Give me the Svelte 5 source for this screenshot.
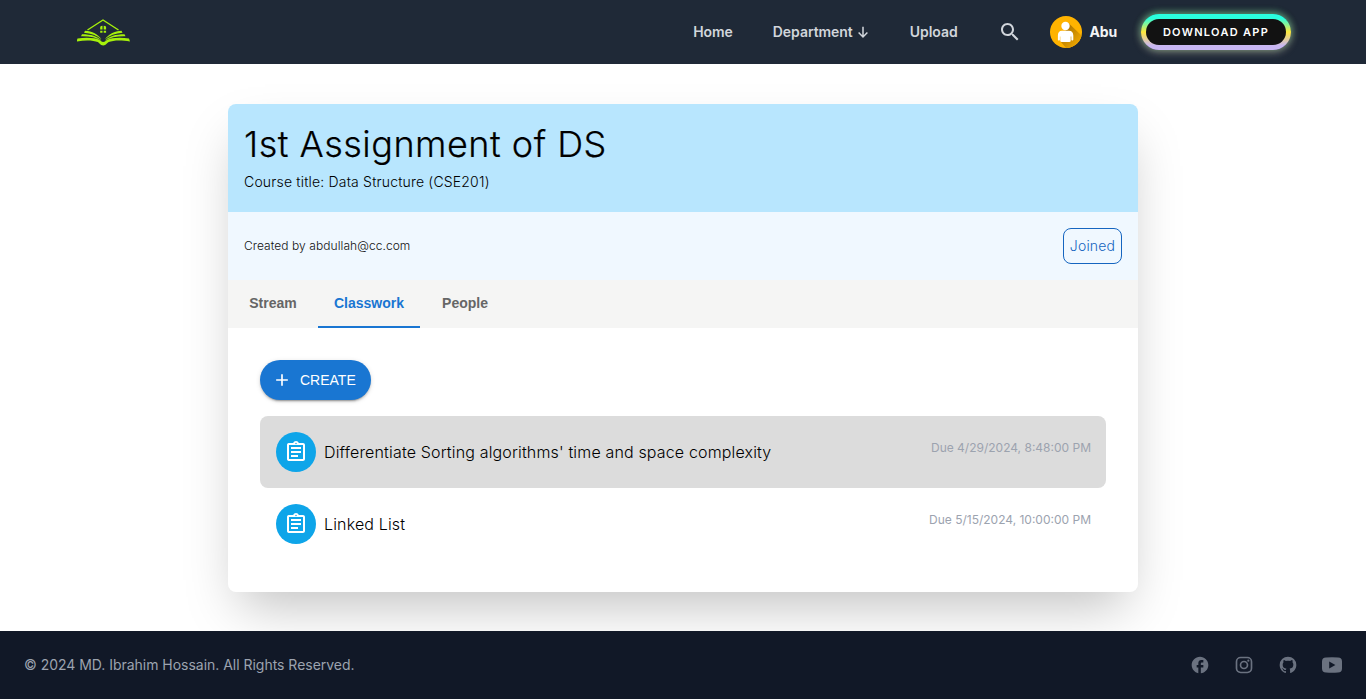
<script>
  const links = ['Home', 'Department', 'Upload'];
  const tabs = ['Stream', 'Classwork', 'People'];
  const active = 'Classwork';
  const tasks = [
    { title: "Differentiate Sorting algorithms' time and space complexity", due: 'Due 4/29/2024, 8:48:00 PM', hover: true },
    { title: 'Linked List', due: 'Due 5/15/2024, 10:00:00 PM', hover: false }
  ];
</script>

<div class="page">
  <header>
    <svg class="logo" viewBox="0 0 54 28" width="54" height="28" fill="none" stroke="#a6f10b">
      <path d="M10.5 12 26 2l15.500 10" stroke-width="1.400" />
      <path d="M23.200 11.600V9.200q0-.900 1-1.200l1.300-.3v3.900zM26.700 11.600V7.700l1.400.3q1 .3 1 1.200v2.400zM23.200 12.700h2.300v2h-2.300zM26.700 12.700h2.400v2h-2.400z" fill="#a6f10b" stroke="none" />
      <path d="M8 12.800c7 .5 13.200 3.500 16.500 8.500-4.500-3.800-10.500-6-17.500-6.600zM44.500 12.800c-7 .5-13.200 3.500-16.500 8.500 4.500-3.800 10.500-6 17.500-6.600zM5 16.300c9 0 15.500 2 19.500 6.300-5-3.300-12-4.600-20.500-4.400zM47.500 16.300c-9 0-15.500 2-19.500 6.300 5-3.300 12-4.600 20.500-4.400zM.5 20.500c9.500-1.300 17.700-.7 22.500 1.700 1.300.8 1.600 1.700 3.200 1.700s2-.9 3.300-1.700c4.800-2.400 13-3 22.500-1.700l1 3.100c-9-1.700-17-1.200-21.300.5-2 1-2.300 3.300-5.500 3.300s-3.500-2.300-5.400-3.300c-4.300-1.700-12.300-2.200-21.300-.5z" fill="#a6f10b" stroke="none" />
    </svg>
    <nav>
      {#each links as link}
        <a class="link">{link}{#if link === 'Department'}<svg viewBox="0 0 24 24" width="14" height="14" fill="none" stroke="currentColor" stroke-width="2.600"><path d="M12 3v17M4.500 13l7.500 7.500 7.500-7.500" /></svg>{/if}</a>
      {/each}
      <svg class="search" viewBox="0 0 24 24" width="24" height="24" fill="currentColor"><path d="M15.500 14h-.79l-.28-.27C15.410 12.590 16 11.110 16 9.500 16 5.910 13.090 3 9.500 3S3 5.910 3 9.500 5.910 16 9.500 16c1.610 0 3.090-.59 4.230-1.570l.27.28v.79l5 4.990L20.490 19l-4.990-5zm-6 0C7.010 14 5 11.990 5 9.500S7.010 5 9.500 5 14 7.010 14 9.500 11.990 14 9.500 14z" /></svg>
      <div class="user">
        <svg viewBox="0 0 32 32" width="32" height="32">
          <defs>
            <clipPath id="disc"><circle cx="16" cy="16" r="16" /></clipPath>
            <linearGradient id="shade" x1="0" y1="0" x2="1" y2="1"><stop offset=".3" stop-color="#b77d00" /><stop offset=".9" stop-color="#f5ab00" /></linearGradient>
          </defs>
          <g clip-path="url(#disc)">
            <path fill="#ffb300" d="M0 0h32v32H0z" />
            <path fill="url(#shade)" d="M18.500 7 32 20v12H16l-5-6z" />
            <circle cx="15.500" cy="10" r="4.200" fill="#fff" />
            <path fill="#fff" d="M12 14.700h7c2.700 0 4.300 2 4.300 4.800v4c0 1.300-2 1.300-2 0v-3h-.6v4.300q0 1.200-1.500 1.200h-7.400q-1.500 0-1.500-1.200v-4.300h-.4v3c0 1.300-2 1.300-2 0v-4c0-2.800 1.400-4.800 4.100-4.800z" />
          </g>
        </svg>
        <span>Abu</span>
      </div>
      <div class="download"><span>DOWNLOAD APP</span></div>
    </nav>
  </header>

  <main>
    <section class="card">
      <div class="hero">
        <h1>1st Assignment of DS</h1>
        <p>Course title: Data Structure (CSE201)</p>
      </div>
      <div class="creator">
        <span>Created by abdullah@cc.com</span>
        <button class="joined">Joined</button>
      </div>
      <div class="tabs">
        {#each tabs as tab}
          <div class="tab" class:active={tab === active}>{tab}</div>
        {/each}
      </div>
      <div class="body">
        <button class="create">
          <svg viewBox="0 0 24 24" width="20" height="20" fill="currentColor"><path d="M19 13h-6v6h-2v-6H5v-2h6V5h2v6h6z" /></svg>
          CREATE
        </button>
        {#each tasks as task}
          <div class="task" class:hover={task.hover}>
            <div class="badge">
              <svg viewBox="0 0 24 24" width="24" height="24" fill="#fff"><path d="M7 15h7v2H7zm0-4h10v2H7zm0-4h10v2H7zm12-4h-4.180C14.400 1.840 13.300 1 12 1c-1.300 0-2.400.84-2.820 2H5c-.14 0-.27.010-.4.040-.39.080-.74.280-1.010.55-.18.180-.33.400-.43.640-.1.230-.16.490-.16.770v14c0 .27.060.54.160.78s.25.450.43.640c.27.270.62.470 1.010.55.130.02.260.03.400.03h14c1.100 0 2-.9 2-2V5c0-1.100-.9-2-2-2zm-7-.25c.41 0 .75.340.75.750s-.34.750-.75.750-.75-.34-.75-.75.340-.75.750-.75zM19 19H5V5h14v14z" /></svg>
            </div>
            <span class="title">{task.title}</span>
            <span class="due">{task.due}</span>
          </div>
        {/each}
      </div>
    </section>
  </main>

  <footer>
    <span>© 2024 MD. Ibrahim Hossain. All Rights Reserved.</span>
    <div class="social">
      <svg viewBox="0 0 24 24" width="20" height="20"><path d="M22 12c0-5.520-4.480-10-10-10S2 6.480 2 12c0 4.840 3.440 8.870 8 9.800V15H8v-3h2V9.500C10 7.570 11.570 6 13.500 6H16v3h-2c-.55 0-1 .45-1 1v2h3v3h-3v6.950c5.050-.5 9-4.760 9-9.950z" /></svg>
      <svg viewBox="0 0 24 24" width="20" height="20"><g fill="none" stroke="currentColor" stroke-width="2"><rect x="3" y="3" width="18" height="18" rx="5" /><circle cx="12" cy="12" r="4.200" /></g><circle cx="17.200" cy="6.800" r="1.300" /></svg>
      <svg viewBox="0 0 24 24" width="20" height="20"><path d="M12 2A10 10 0 0 0 2 12c0 4.420 2.870 8.170 6.840 9.500.5.080.66-.23.66-.5v-1.690c-2.770.6-3.360-1.340-3.360-1.340-.46-1.160-1.110-1.470-1.110-1.470-.91-.62.070-.6.070-.6 1 .07 1.530 1.030 1.530 1.030.87 1.520 2.340 1.070 2.910.83.090-.65.350-1.090.63-1.340-2.220-.25-4.550-1.110-4.550-4.920 0-1.110.38-2 1.030-2.710-.1-.25-.45-1.290.1-2.640 0 0 .84-.27 2.750 1.020.79-.22 1.650-.33 2.500-.33s1.710.11 2.500.33c1.910-1.290 2.750-1.020 2.750-1.020.55 1.350.2 2.390.1 2.640.65.710 1.030 1.600 1.030 2.710 0 3.820-2.340 4.660-4.570 4.910.36.310.69.920.69 1.850V21c0 .27.160.59.670.5C19.140 20.160 22 16.420 22 12A10 10 0 0 0 12 2z" /></svg>
      <svg viewBox="0 0 20 16" width="20" height="16"><path fill-rule="evenodd" d="M4 .6Q10 0 16 .6q4 0 4 4v6.800q0 4-4 4-6 .6-12 0-4 0-4-4V4.600q0-4 4-4zM7.200 4.600v6.800L13.400 8z" /></svg>
    </div>
  </footer>
</div>

<style>
  :global(body) { background: #fff; font-family: Inter, sans-serif; }
  .page { height: 699px; display: flex; flex-direction: column; overflow: hidden; }
  header { height: 64px; flex: none; box-sizing: border-box; padding: 0 75px 0 77px; background: #1f2937; display: flex; align-items: center; justify-content: space-between; color: #d1d5db; }
  .logo { display: block; }
  nav { display: flex; align-items: center; }
  .link { font-size: 14px; font-weight: 600; line-height: 20px; letter-spacing: -.05px; margin-right: 40px; display: flex; align-items: center; gap: 3px; }
  .search { margin-right: 28px; }
  .user { display: flex; align-items: center; gap: 8px; color: #f3f4f6; font-size: 14px; font-weight: 700; letter-spacing: -.2px; margin-right: 24px; }
  .user span { padding-bottom: 2px; }
  .download { width: 150px; height: 36px; box-sizing: border-box; padding: 5px; border-radius: 18px; background: linear-gradient(#2affdf 12%, #ffe83b 50%, #c8b6f2 88%); box-shadow: 0 -2px 7px rgba(42, 255, 190, .3), 0 0 8px rgba(255, 235, 80, .35), 0 2px 8px rgba(200, 182, 242, .35); }
  .download span { display: flex; align-items: center; justify-content: center; height: 26px; border-radius: 13px; background: #121212; color: #fff; font-size: 11px; font-weight: 600; letter-spacing: 1.300px; }
  main { flex: 1; min-height: 0; padding-top: 40px; }
  .card { width: 910px; height: 488px; margin: 0 auto; border-radius: 8px; overflow: hidden; background: #fff; box-shadow: 0 25px 50px -12px rgba(0, 0, 0, .25); }
  .hero { height: 108px; box-sizing: border-box; padding: 20px 16px; background: #b8e6fe; color: #000; }
  h1 { margin: 0; font-size: 36px; line-height: 40px; font-weight: 300; letter-spacing: .48px; -webkit-text-stroke: .2px #000; }
  p { margin: 8px 0 0; font-size: 14px; line-height: 20px; font-weight: 300; letter-spacing: .185px; }
  .creator { height: 68px; box-sizing: border-box; padding: 0 16px; background: #f0f8ff; display: flex; align-items: center; justify-content: space-between; font-size: 12px; font-weight: 300; letter-spacing: .065px; color: #111; }
  .creator span { padding-bottom: 2px; }
  .joined { width: 59px; height: 36px; padding: 0 0 2px; border: 1px solid #1565c0; border-radius: 8px; background: none; color: #1565c0; font: 300 14px Inter, sans-serif; letter-spacing: .18px; }
  .tabs { height: 48px; background: #f5f5f4; display: flex; }
  .tab { box-sizing: border-box; width: 90px; padding-top: 14px; text-align: center; font: 700 14px/18px "Liberation Sans", sans-serif; color: #666; border-bottom: 2px solid transparent; }
  .tab.active { width: 102px; color: #1976d2; border-color: #1976d2; }
  .body { padding: 32px; }
  .create { width: 111px; height: 40px; margin: 0 0 16px; padding: 0 0 0 12px; border: 0; border-radius: 20px; background: #1976d2; color: #fff; display: flex; align-items: center; gap: 8px; font: 14px "Liberation Sans", sans-serif; box-shadow: 0 3px 1px -2px rgba(0, 0, 0, .2), 0 2px 2px rgba(0, 0, 0, .14), 0 1px 5px rgba(0, 0, 0, .12); }
  .task { height: 72px; box-sizing: border-box; padding: 16px 15px 16px 16px; border-radius: 8px; display: flex; align-items: center; }
  .task.hover { background: #dcdcdc; }
  .badge { width: 40px; height: 40px; border-radius: 50%; background: #0ea5e9; display: flex; align-items: center; justify-content: center; margin-right: 8px; }
  .title { font-size: 16px; font-weight: 300; letter-spacing: .157px; color: #000; }
  .due { margin-left: auto; align-self: flex-start; font-size: 12px; line-height: 16px; letter-spacing: 0; padding-top: 8px; color: #9ca3af; }
  footer { height: 68px; flex: none; position: relative; box-sizing: border-box; padding: 0 24px; background: #111827; color: #9ca3af; display: flex; align-items: center; justify-content: space-between; font-size: 14px; letter-spacing: -.025px; }
  footer span { padding-bottom: 2px; }
  .social { display: flex; align-items: center; gap: 24px; color: #6b7280; }
  .social svg { fill: currentColor; display: block; }
</style>
